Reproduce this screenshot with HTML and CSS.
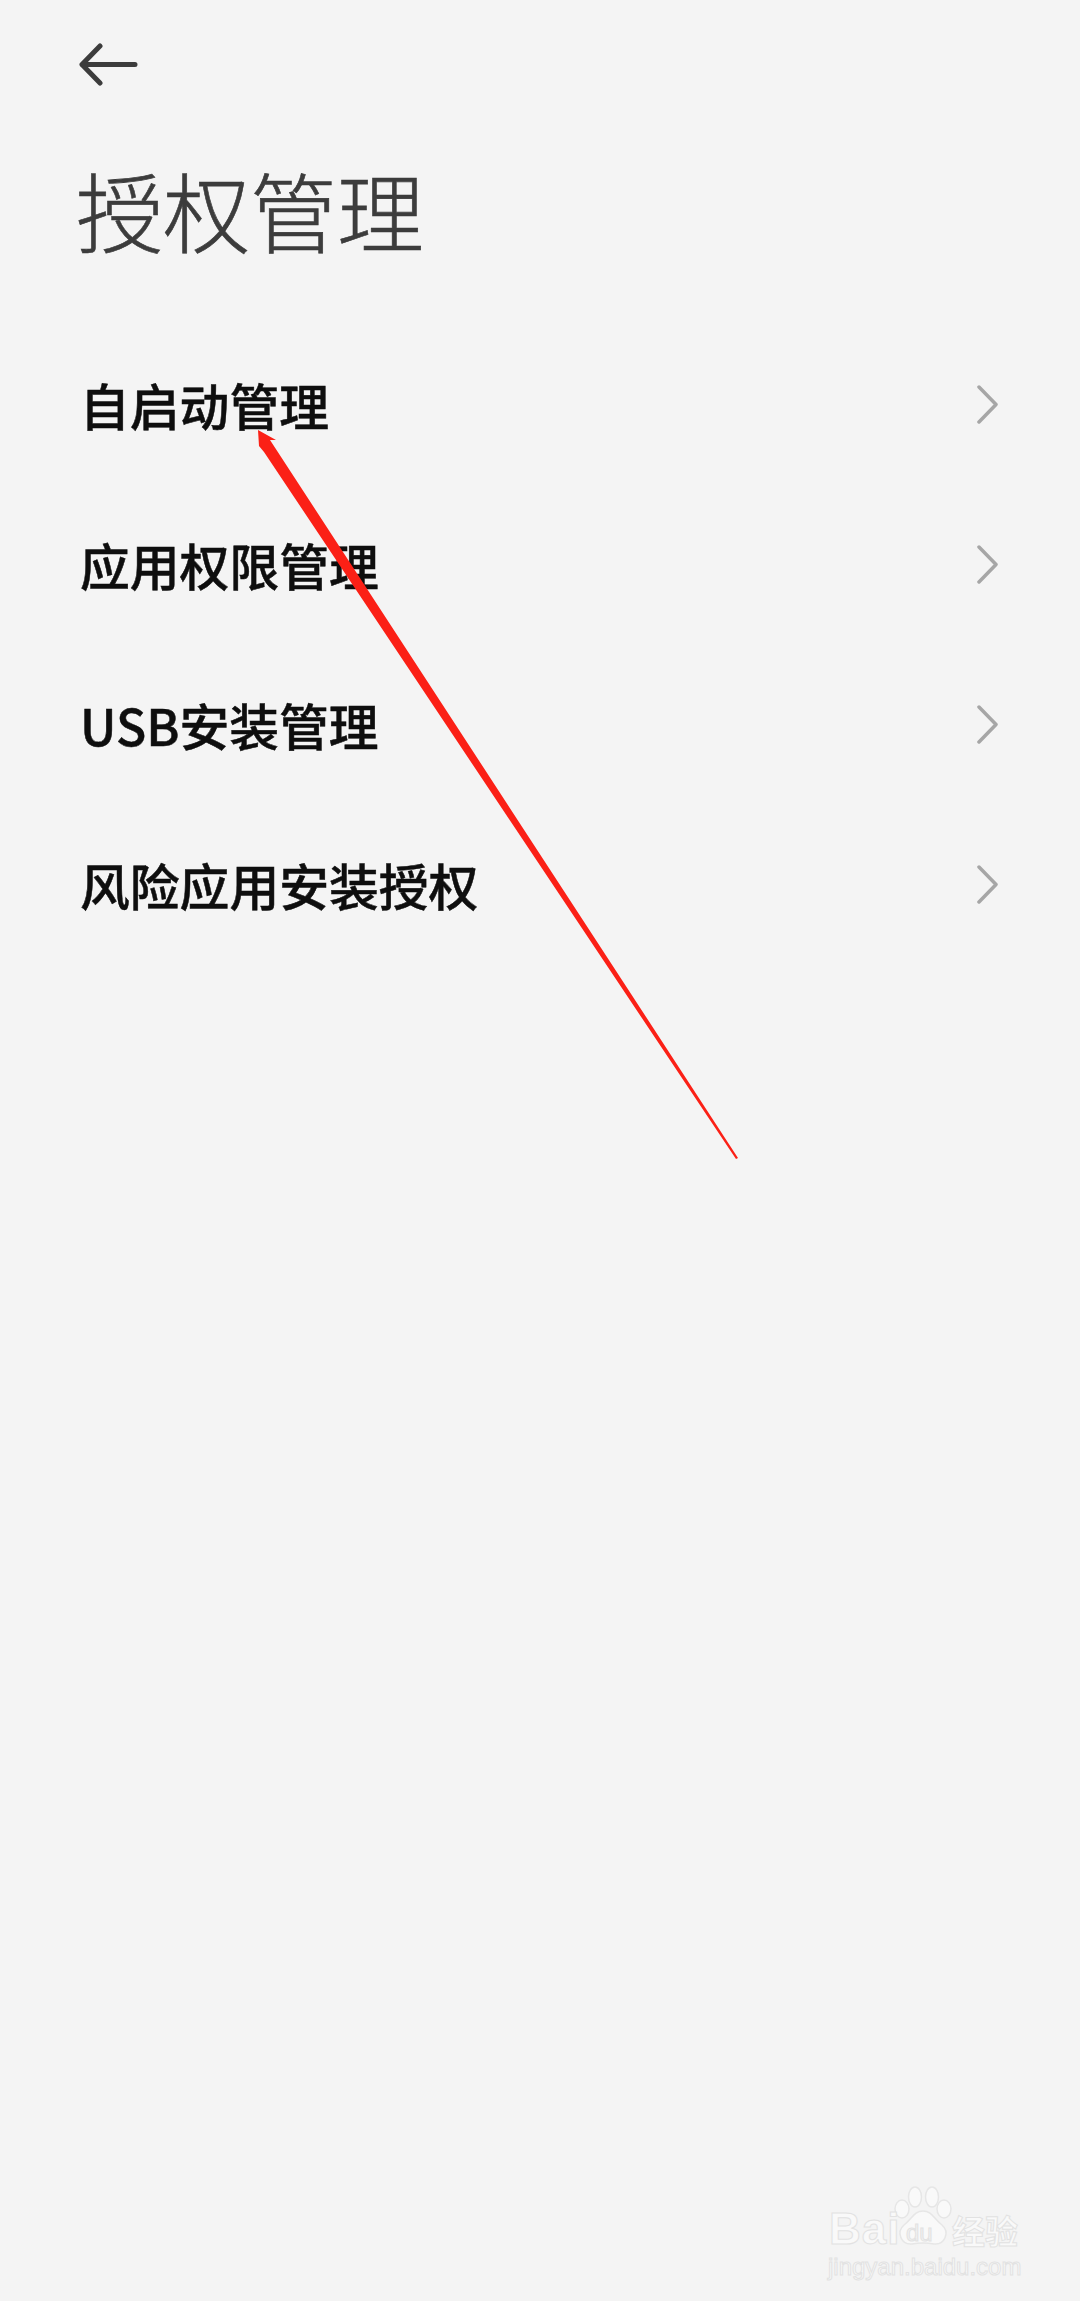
FILE: index.html
```html
<!DOCTYPE html>
<html lang="zh-CN">
<head>
<meta charset="utf-8">
<title>授权管理</title>
<link rel="stylesheet" href="styles.css">
</head>
<body>
<main class="page">
  <header class="top">
    <svg class="back" width="60" height="44" viewBox="0 0 60 44"><path d="M21 4 3 22.500 21 41M3 22.500H56" fill="none" stroke="#3c3c3c" stroke-width="5" stroke-linecap="round" stroke-linejoin="round"/></svg>
    <h1 class="title">授权管理</h1>
  </header>
  <ul class="list">
    <li class="row"><span class="label">自启动管理</span><svg class="chev" width="24" height="40" viewBox="0 0 24 40"><path d="M3 2 20 19.500 3 37" fill="none" stroke="#a6a6a6" stroke-width="3.500" stroke-linecap="round" stroke-linejoin="round"/></svg></li>
    <li class="row"><span class="label">应用权限管理</span><svg class="chev" width="24" height="40" viewBox="0 0 24 40"><path d="M3 2 20 19.500 3 37" fill="none" stroke="#a6a6a6" stroke-width="3.500" stroke-linecap="round" stroke-linejoin="round"/></svg></li>
    <li class="row"><span class="label">USB安装管理</span><svg class="chev" width="24" height="40" viewBox="0 0 24 40"><path d="M3 2 20 19.500 3 37" fill="none" stroke="#a6a6a6" stroke-width="3.500" stroke-linecap="round" stroke-linejoin="round"/></svg></li>
    <li class="row"><span class="label">风险应用安装授权</span><svg class="chev" width="24" height="40" viewBox="0 0 24 40"><path d="M3 2 20 19.500 3 37" fill="none" stroke="#a6a6a6" stroke-width="3.500" stroke-linecap="round" stroke-linejoin="round"/></svg></li>
  </ul>
</main>
<svg class="annot" width="1080" height="2301" viewBox="0 0 1080 2301"><path d="M258 430 276 440 270 440 738 1158 736 1159 264 452 259 446Z" fill="#fb2016"/></svg>
<div class="mark">
  <svg class="paw" width="58" height="60" viewBox="0 0 58 60"><g fill="#f9f9f9" stroke="#e6e6e6" stroke-width="1.500"><ellipse cx="8" cy="23" rx="7" ry="9"/><ellipse cx="21" cy="11" rx="6.500" ry="10"/><ellipse cx="38" cy="11" rx="6.500" ry="10"/><ellipse cx="50" cy="23" rx="7" ry="9"/><path d="M29 25C20 25 18 33 10 39 2 46 7 59 18 58 24 57 34 57 40 58 51 59 56 46 48 39 40 33 38 25 29 25Z"/></g></svg>
  <span class="bai">Bai</span>
  <span class="du">du</span>
  <span class="jy">经验</span>
  <span class="url">jingyan.baidu.com</span>
</div>
</body>
</html>
```
FILE: styles.css
```css
* { box-sizing: border-box; }
html, body { margin: 0; padding: 0; }
body {
  width: 1080px;
  height: 2301px;
  overflow: hidden;
  position: relative;
  background: #f4f4f4;
  font-family: "Noto Sans CJK SC", "Noto Sans", sans-serif;
}
.page { display: flex; flex-direction: column; padding: 42px 80px 0 80px; }
.top { display: flex; flex-direction: column; }
.back { margin-left: -1px; display: block; }
.title {
  margin: 63px 0 0 -4px;
  font-size: 87px;
  line-height: 120px;
  font-weight: 300;
  color: #3c3c3c;
  -webkit-text-stroke: 0.600px #3c3c3c;
}
.list { list-style: none; margin: 55px 0 0 0; padding: 0; display: flex; flex-direction: column; }
.row { height: 160px; display: flex; align-items: center; justify-content: space-between; }
.label {
  font-size: 49.800px;
  font-weight: 500;
  color: #0e0e0e;
  line-height: 70px;
  -webkit-text-stroke: 0.500px #0e0e0e;
}
.chev { display: block; position: relative; top: 1px; }
.annot { position: absolute; left: 0; top: 0; pointer-events: none; }
.mark { position: absolute; left: 826px; top: 2184px; width: 200px; height: 100px; color: #f9f9f9; white-space: nowrap; }
.paw { position: absolute; left: 68px; top: 2px; }
.bai, .du, .jy, .url { position: absolute; -webkit-text-stroke: 1px #e2e2e2; font-family: "Liberation Sans", sans-serif; }
.bai { left: 3px; top: 20px; font-size: 44px; line-height: 50px; font-weight: 700; letter-spacing: 1px; }
.du { left: 80px; top: 34px; font-size: 24px; line-height: 30px; color: #f2f2f2; }
.jy { left: 126px; top: 26px; font-size: 33px; line-height: 40px; font-weight: 700; font-family: "Noto Sans CJK SC", sans-serif; }
.url { left: 2px; top: 68px; font-size: 24px; line-height: 30px; }
```
